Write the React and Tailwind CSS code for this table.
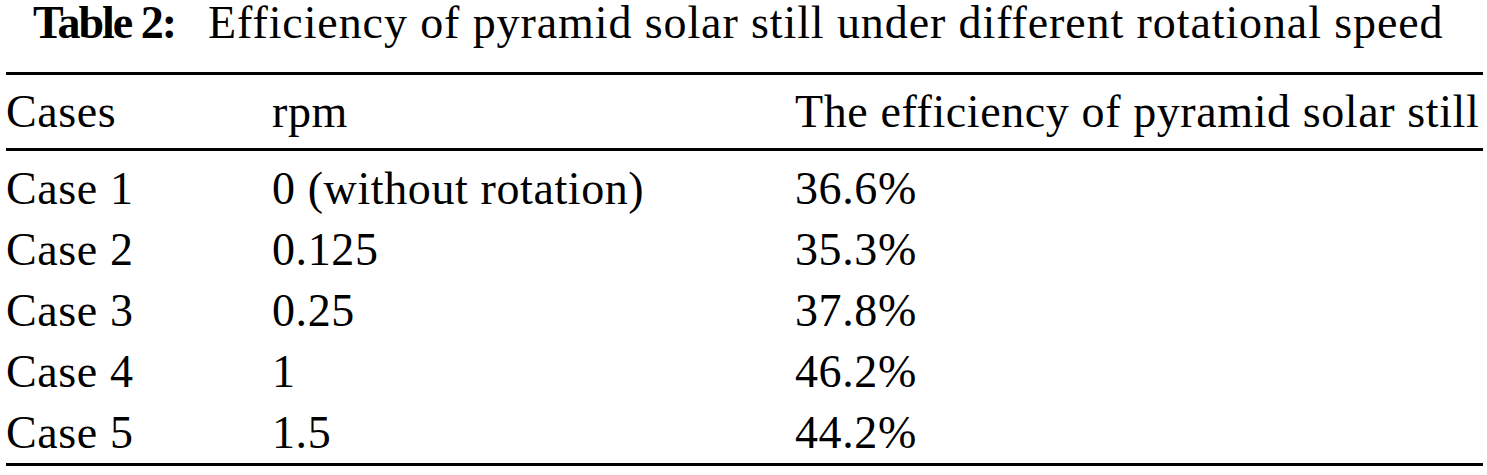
export default function App() {
  const rows = [
    ["Case 1", "0 (without rotation)", "36.6%"],
    ["Case 2", "0.125", "35.3%"],
    ["Case 3", "0.25", "37.8%"],
    ["Case 4", "1", "46.2%"],
    ["Case 5", "1.5", "44.2%"],
  ];
  return (
    <div className="w-[1487px] h-[475px] bg-white text-black overflow-hidden" style={{ fontFamily: '"Liberation Serif", "Times New Roman", serif' }}>
      <div className="flex items-baseline pl-[33px] text-[46px] leading-[46px] whitespace-nowrap">
        <span className="font-bold tracking-[-2px]">Table 2:</span>
        <span className="ml-[33px] tracking-[0.9px]">Efficiency of pyramid solar still under different rotational speed</span>
      </div>
      <div className="ml-[6px] w-[1477px] mt-[26px] text-[46px] whitespace-nowrap tracking-[0.6px]">
        <div className="h-[3px] bg-black" />
        <div className="grid grid-cols-[266px_523px_1fr] pt-[14px] pb-[13px] leading-[46px]">
          <div>Cases</div>
          <div>rpm</div>
          <div>The efficiency of pyramid solar still</div>
        </div>
        <div className="h-[3px] bg-black" />
        <div className="pt-[7px]">
          {rows.map((r) => (
            <div key={r[0]} className="grid grid-cols-[266px_523px_1fr] leading-[61px]">
              <div>{r[0]}</div>
              <div>{r[1]}</div>
              <div>{r[2]}</div>
            </div>
          ))}
        </div>
        <div className="h-[3px] bg-black" />
      </div>
    </div>
  );
}
